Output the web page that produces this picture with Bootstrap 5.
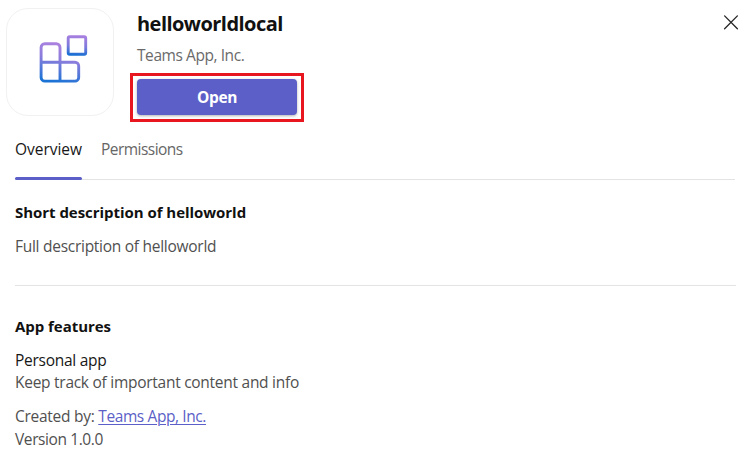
<!DOCTYPE html>
<html lang="en">
<head>
<meta charset="utf-8">
<meta name="viewport" content="width=device-width, initial-scale=1">
<title>helloworldlocal</title>
<link href="https://cdn.jsdelivr.net/npm/bootstrap@5.3.0/dist/css/bootstrap.min.css" rel="stylesheet">
<style>
body { font-family: "Open Sans", "Noto Sans", sans-serif; font-size: 15.5px; line-height: 22px; letter-spacing: -.27px; color: #505050; background: #fff; overflow: hidden; }
.dialog-head { height: 122px; padding: 8px 11px 0 6px; }
.app-tile { width: 108px; height: 108px; border: 1px solid #f1f1f1; border-radius: 22px; }
.app-meta { margin-left: 16px; }
.app-title { font-size: 20px; line-height: 32px; font-weight: 700; color: #111; padding-left: 7px; letter-spacing: -.54px; }
.app-owner { line-height: 22px; margin-top: 4px; padding-left: 7px; color: #6a6a6a; letter-spacing: -.43px; }
.highlight { width: 174px; height: 49px; margin-top: 7px; padding: 3px 4px; border: 3px solid #e8171f; }
.btn-open { height: 36px; padding: 2px 0 0; font-family: inherit; font-size: 15.5px; font-weight: 700; color: #fff; background: #5b5fc7; border: 0; border-radius: 4px; box-shadow: 0 1px 3px rgba(0,0,0,.3); letter-spacing: -.35px; }
.btn-open:hover { background: #4f52b2; color: #fff; }
.btn-x { width: 16px; height: 16px; margin-top: 6px; }
.tab-row { height: 58px; margin: 0 15px; border-bottom: 1px solid #e3e3e3; gap: 19px; }
.tab-row .nav-link { height: 58px; padding: 16px 0 0; color: #666; letter-spacing: -.53px; }
.tab-row .nav-link.active { color: #171717; position: relative; letter-spacing: -.03px; }
.tab-row .nav-link.active::after { content: ""; position: absolute; left: 0; right: 0; bottom: 0; height: 3px; border-radius: 2px; background: #5b5fc7; }
.panel { margin: 0 14px 0 15px; }
.heading { font-size: 15px; line-height: 22px; font-weight: 700; color: #111; letter-spacing: -.04px; }
.about { height: 106px; padding-top: 21px; border-bottom: 1px solid #e3e3e3; }
.features { padding-top: 29px; }
.strong-line { color: #171717; }
.version { line-height: 24px; letter-spacing: -.4px; }
.maker { color: #5b5fc7; letter-spacing: -.4px; text-underline-offset: 2px; text-decoration-thickness: 1px; }
</style>
</head>
<body>
<header class="dialog-head d-flex align-items-start">
  <div class="app-tile d-flex flex-shrink-0">
    <svg width="106" height="106" viewBox="7.2 8.7 106 106" fill="none" stroke-width="2.9">
      <defs>
        <linearGradient id="g1" gradientUnits="userSpaceOnUse" x1="66" y1="42" x2="58" y2="82"><stop stop-color="#b182e0"/><stop offset=".45" stop-color="#8a7ddc"/><stop offset="1" stop-color="#1b73d5"/></linearGradient>
        <linearGradient id="g2" gradientUnits="userSpaceOnUse" x1="78" y1="35" x2="76" y2="55"><stop stop-color="#a87fe0"/><stop offset=".55" stop-color="#7f7adc"/><stop offset="1" stop-color="#176fd3"/></linearGradient>
      </defs>
      <path stroke="url(#g1)" d="M45 43.4h11.5a3.7 3.7 0 0 1 3.7 3.7v14.8h15a3.7 3.7 0 0 1 3.7 3.7v11.5a3.7 3.7 0 0 1-3.7 3.7H45a3.7 3.7 0 0 1-3.7-3.7v-30a3.7 3.7 0 0 1 3.7-3.7zM41.3 61.9h18.9v18.9"/>
      <rect x="68.4" y="36.4" width="17.5" height="17.5" rx="1.5" stroke="url(#g2)"/>
    </svg>
  </div>
  <div class="app-meta flex-grow-1">
    <h1 class="app-title mb-0">helloworldlocal</h1>
    <div class="app-owner">Teams App, Inc.</div>
    <div class="highlight"><button type="button" class="btn btn-open w-100 d-block">Open</button></div>
  </div>
  <button type="button" class="btn-x btn p-0 border-0 d-flex" aria-label="Close">
    <svg width="16" height="16" viewBox="0 0 16 16" stroke="#242424" stroke-width="1.3" stroke-linecap="round"><path d="M1.6 1.9l12.8 12.8M14.4 1.9L1.6 14.7"/></svg>
  </button>
</header>
<nav class="nav tab-row">
  <a class="nav-link active" href="#">Overview</a>
  <a class="nav-link" href="#">Permissions</a>
</nav>
<main class="panel">
  <section class="about">
    <h2 class="heading mb-0">Short description of helloworld</h2>
    <p class="mb-0 mt-2 pt-1">Full description of helloworld</p>
  </section>
  <section class="features">
    <h2 class="heading mb-0">App features</h2>
    <div class="strong-line mt-2 pt-1">Personal app</div>
    <div>Keep track of important content and info</div>
    <div class="mt-2 pt-1">Created by: <a class="maker" href="#">Teams App, Inc.</a></div>
    <div class="version">Version 1.0.0</div>
  </section>
</main>
<script src="https://cdn.jsdelivr.net/npm/bootstrap@5.3.0/dist/js/bootstrap.bundle.min.js"></script>
</body>
</html>
